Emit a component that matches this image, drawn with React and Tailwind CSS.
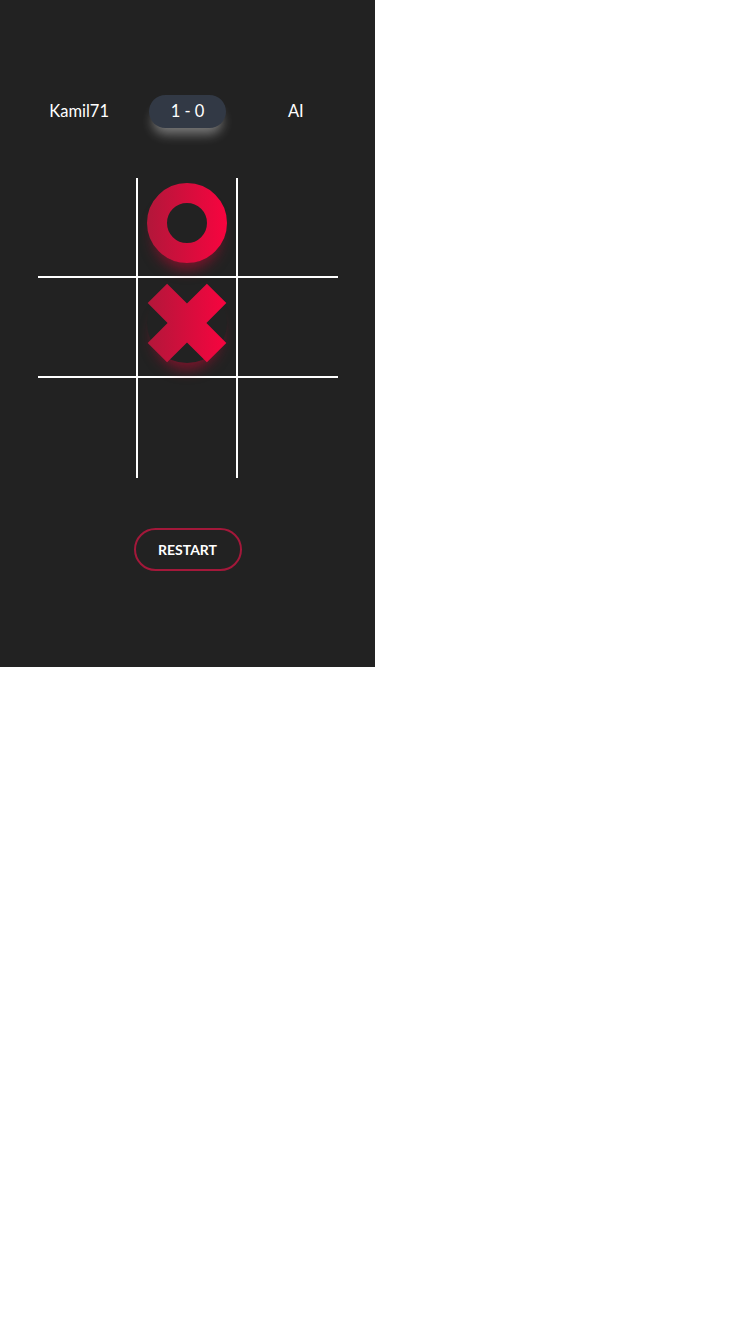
import React from "react";

function OMark() {
  return (
    <div className="w-[80px] h-[80px] rounded-full shadow-[0_13px_14px_-7px_rgba(190,10,50,0.6)]">
      <svg width="80" height="80" viewBox="0 0 80 80">
        <defs>
          <linearGradient id="og" x1="0" y1="0" x2="80" y2="0" gradientUnits="userSpaceOnUse">
            <stop offset="0" stopColor="#b2173a" />
            <stop offset="1" stopColor="#f8043f" />
          </linearGradient>
        </defs>
        <circle cx="40" cy="40" r="30" fill="none" stroke="url(#og)" strokeWidth="20" />
      </svg>
    </div>
  );
}

function XMark() {
  return (
    <div className="w-[80px] h-[80px] rounded-full shadow-[0_13px_14px_-7px_rgba(190,10,50,0.6)]">
      <svg width="80" height="80" viewBox="0 0 80 80">
        <defs>
          <linearGradient id="xg" x1="0" y1="0" x2="80" y2="0" gradientUnits="userSpaceOnUse">
            <stop offset="0" stopColor="#b2173a" />
            <stop offset="1" stopColor="#f8043f" />
          </linearGradient>
        </defs>
        <path
          fill="url(#xg)"
          d="M0.7 20.1 L20.1 0.7 L40 20.6 L59.9 0.7 L79.3 20.1 L59.4 40 L79.3 59.9 L59.9 79.3 L40 59.4 L20.1 79.3 L0.7 59.9 L20.6 40 Z"
        />
      </svg>
    </div>
  );
}

export default function App() {
  const cells = [null, "O", null, null, "X", null, null, null, null];
  const borderCls = [
    "border-r-2 border-b-2",
    "border-r-2 border-b-2",
    "border-b-2",
    "border-r-2 border-b-2",
    "border-r-2 border-b-2",
    "border-b-2",
    "border-r-2",
    "border-r-2",
    "",
  ];
  return (
    <div className="w-[750px] h-[1334px] bg-white">
      <div
        className="w-[375px] h-[667px] bg-[#222222] text-white flex flex-col items-center pt-[95px]"
        style={{ fontFamily: "Lato, 'Open Sans', sans-serif" }}
      >
        <div className="w-[325px] grid grid-cols-3 items-center text-[16.5px]">
          <div className="text-center">Kamil71</div>
          <div className="flex justify-center">
            <div className="w-[77px] h-[33px] rounded-full bg-[#323945] flex items-center justify-center shadow-[0_10px_12px_-4px_rgba(255,255,255,0.4)]">
              1 - 0
            </div>
          </div>
          <div className="text-center">AI</div>
        </div>

        <div className="mt-[50px] w-[300px] h-[300px] grid grid-cols-3 grid-rows-3">
          {cells.map((c, i) => (
            <div key={i} className={`border-white flex justify-center pt-[5px] ${borderCls[i]}`}>
              {c === "O" && <OMark />}
              {c === "X" && <XMark />}
            </div>
          ))}
        </div>

        <button className="mt-[50px] w-[108px] h-[43px] rounded-full border-2 border-[#a3183a] text-[14px] font-bold text-white">
          RESTART
        </button>
      </div>
    </div>
  );
}
